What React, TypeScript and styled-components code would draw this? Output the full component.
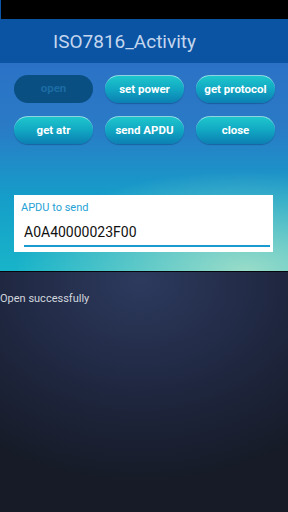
import React from "react";
import styled, { createGlobalStyle } from "styled-components";

const GlobalStyle = createGlobalStyle`
  html, body {
    margin: 0;
    padding: 0;
    background: #161b27;
  }
  body {
    font-family: Roboto, "Liberation Sans", sans-serif;
  }
`;

const buttons = [
  { label: "open", disabled: true },
  { label: "set power" },
  { label: "get protocol" },
  { label: "get atr" },
  { label: "send APDU" },
  { label: "close" },
];

const App: React.FC = () => {
  return (
    <Screen>
      <GlobalStyle />
      <StatusBar />
      <TitleBar>ISO7816_Activity</TitleBar>
      <Content>
        <ButtonGrid>
          {buttons.map((b) => (
            <PillButton key={b.label} disabled={b.disabled}>
              {b.label}
            </PillButton>
          ))}
        </ButtonGrid>
        <FieldBox>
          <FieldLabel>APDU to send</FieldLabel>
          <FieldValue>A0A40000023F00</FieldValue>
        </FieldBox>
      </Content>
      <Output>
        <Message>Open successfully</Message>
      </Output>
    </Screen>
  );
};

export default App;

const Screen = styled.div`
  width: 288px;
  height: 512px;
  display: flex;
  flex-direction: column;
  overflow: hidden;
`;

const StatusBar = styled.div`
  height: 19px;
  background: #000;
  border-left: 1px solid #0a55a5;
`;

const TitleBar = styled.div`
  height: 44px;
  background: #0a54a3;
  color: #c4d6ee;
  font-size: 19px;
  padding-left: 53px;
  display: flex;
  align-items: center;
  box-sizing: border-box;
  padding-top: 1px;
`;

const Content = styled.div`
  height: 208px;
  box-sizing: border-box;
  padding: 12px 14px 0 14px;
  background:
    radial-gradient(ellipse 230px 100px at 245px 208px, rgba(160, 222, 200, 0.95), rgba(160, 222, 200, 0) 100%),
    linear-gradient(180deg, #2b72c6 0%, #2a7ac6 30%, #159ec9 65%, #18b4c9 100%);
`;

const ButtonGrid = styled.div`
  display: grid;
  grid-template-columns: repeat(3, 79px);
  column-gap: 12px;
  row-gap: 13px;
`;

const PillButton = styled.div<{ disabled?: boolean }>`
  height: 28px;
  border-radius: 14px;
  display: flex;
  align-items: center;
  justify-content: center;
  font-size: 11.5px;
  font-weight: bold;
  padding-bottom: 2px;
  box-sizing: border-box;
  color: ${({ disabled }) => (disabled ? "#1b6ba3" : "#ffffff")};
  background: ${({ disabled }) =>
    disabled
      ? "#0a4f82"
      : "linear-gradient(180deg, #1ec6cc 0%, #12aac4 45%, #0b7fb2 100%)"};
  border-top: ${({ disabled }) =>
    disabled ? "none" : "1px solid rgba(200, 245, 245, 0.7)"};
  box-shadow: ${({ disabled }) =>
    disabled ? "none" : "0 1px 1px rgba(0, 40, 90, 0.35)"};
`;

const FieldBox = styled.div`
  margin-top: 51px;
  width: 259px;
  height: 57px;
  background: #fff;
  box-sizing: border-box;
  padding: 6px 3px 0 7px;
`;

const FieldLabel = styled.div`
  font-size: 11px;
  color: #1fa2d6;
  line-height: 13px;
`;

const FieldValue = styled.div`
  margin: 8px 0 0 3px;
  font-size: 14px;
  color: #111;
  line-height: 20px;
  border-bottom: 2px solid #1a9ad0;
  padding-bottom: 3px;
`;

const Output = styled.div`
  flex: 1;
  border-top: 1px solid #05070c;
  background:
    radial-gradient(ellipse 260px 200px at 140px 10px, #2d3a5e 0%, #1f2740 55%, #161b27 100%);
`;

const Message = styled.div`
  margin-top: 20px;
  font-size: 11px;
  color: #d2d6de;
`;
